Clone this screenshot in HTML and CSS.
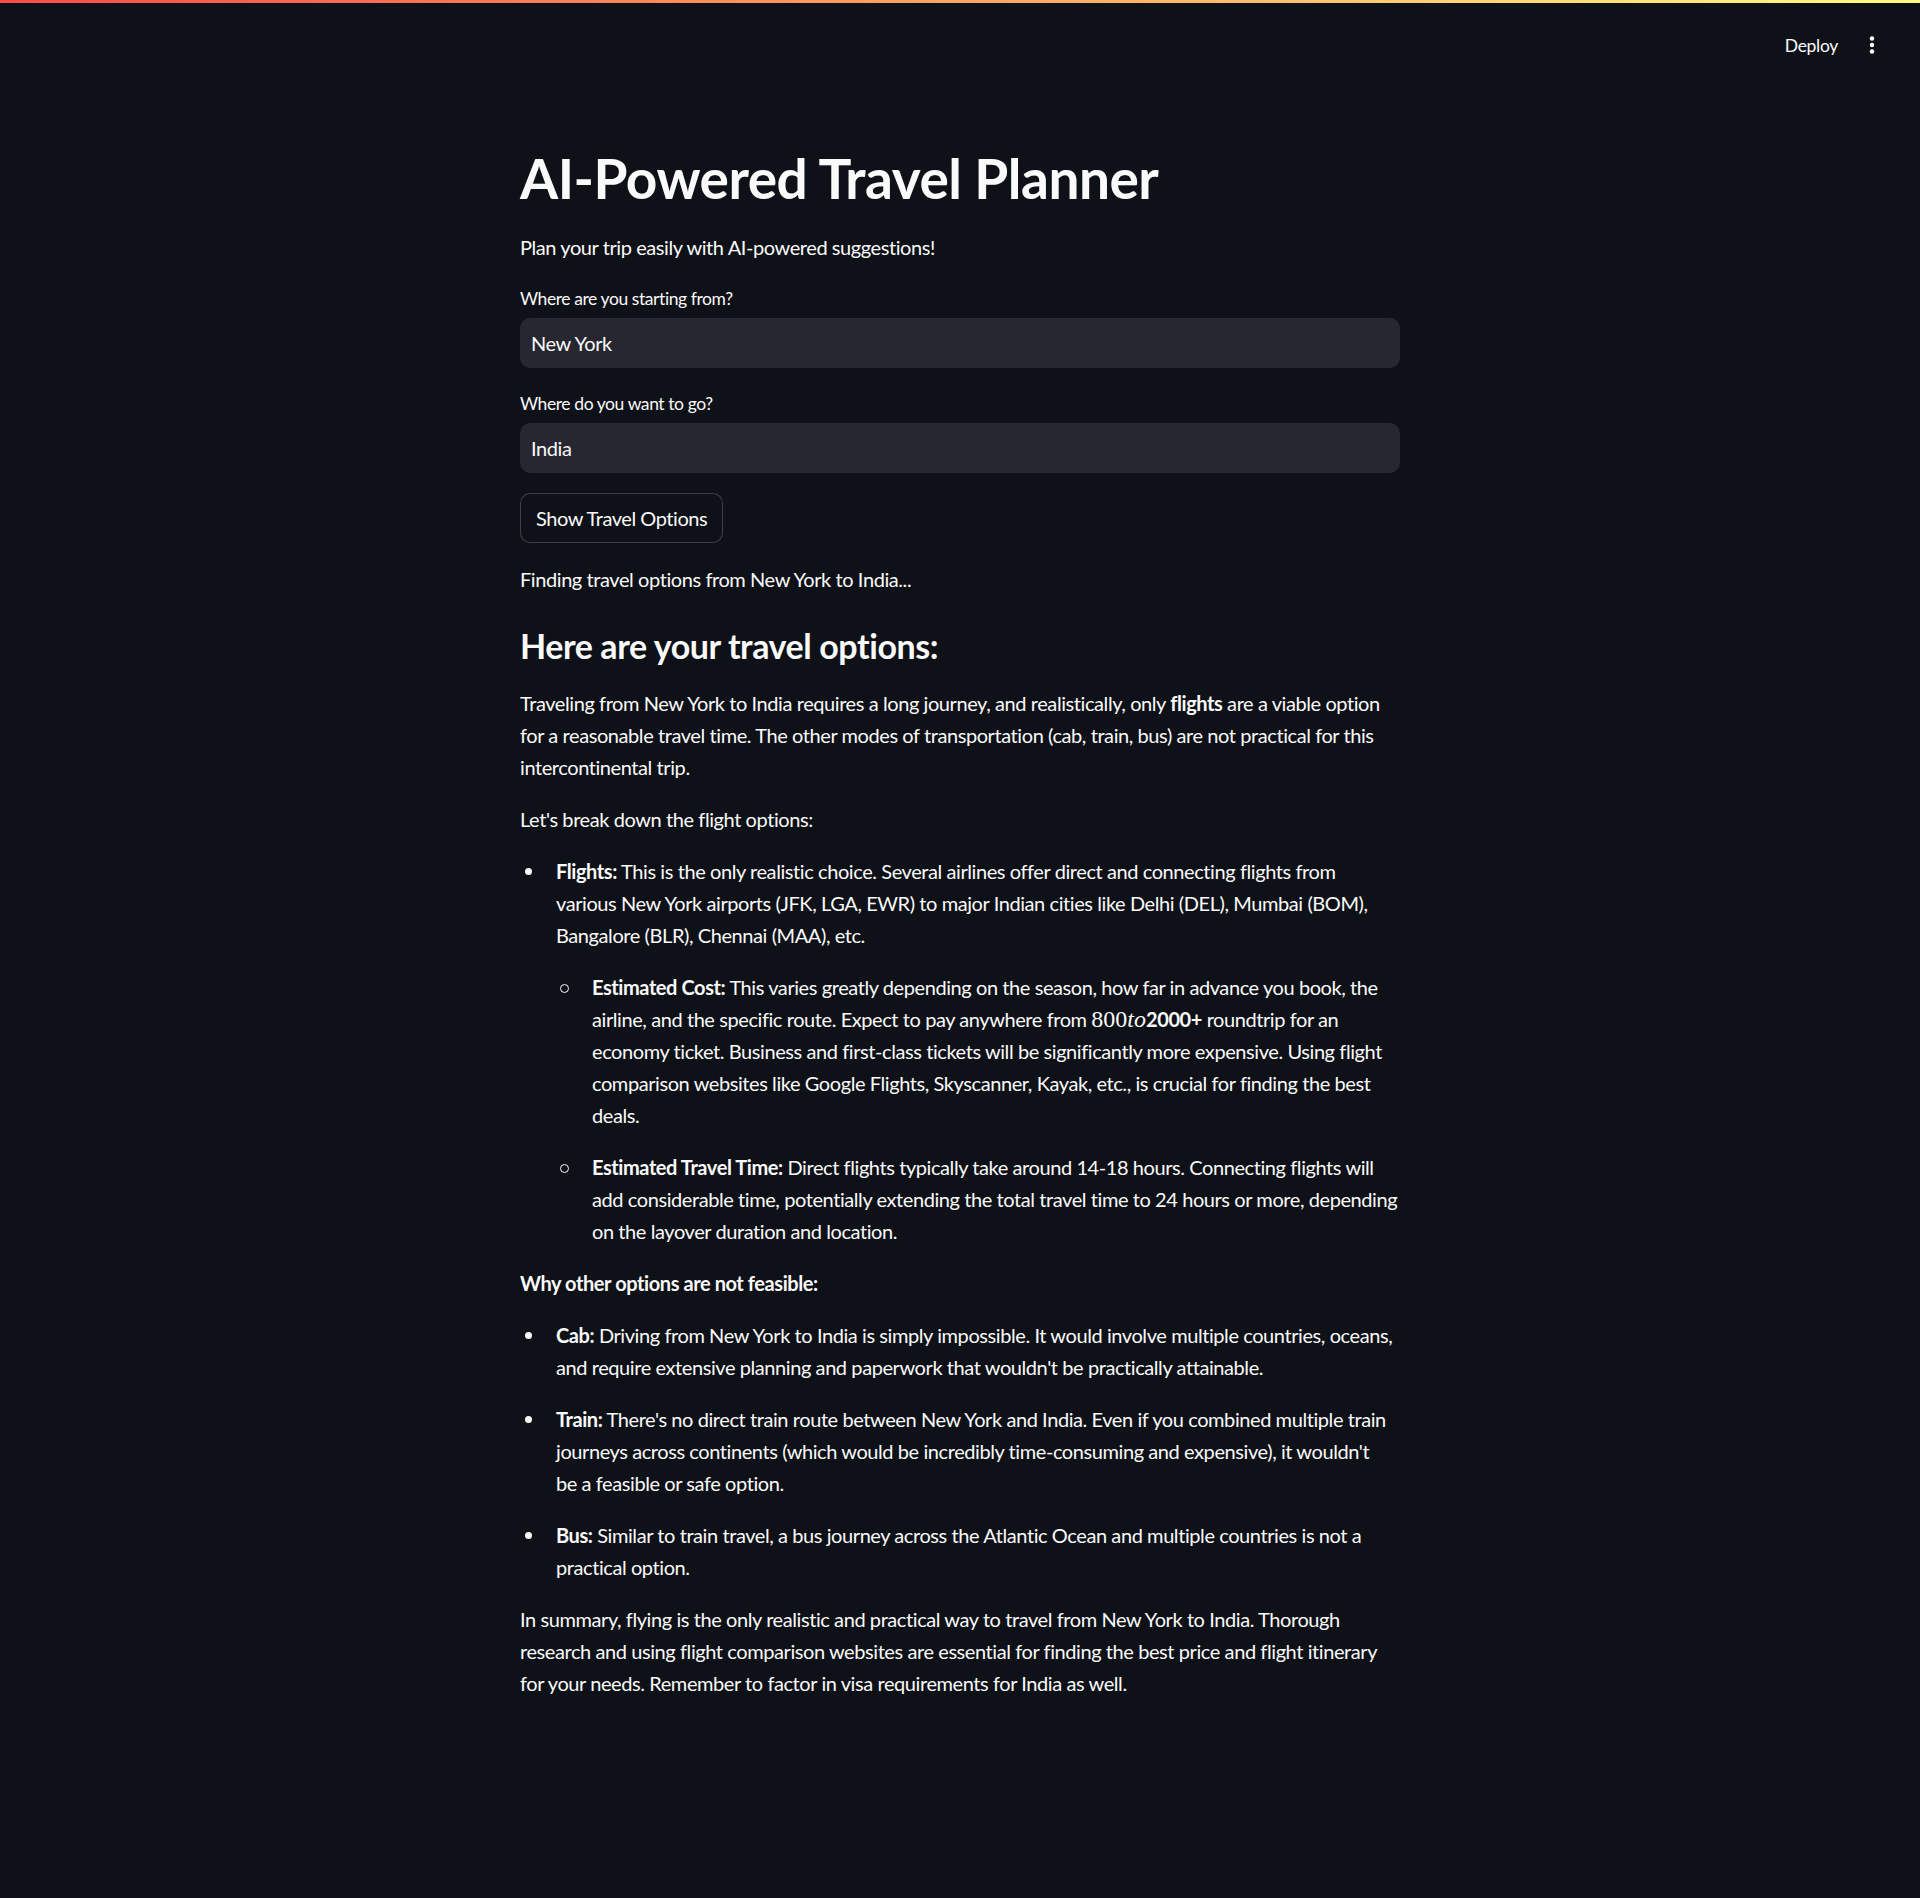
FILE: index.html
```html
<!DOCTYPE html>
<html lang="en">
<head>
<meta charset="utf-8">
<title>AI-Powered Travel Planner</title>
<link rel="stylesheet" href="styles.css">
</head>
<body>
<div class="decoration"></div>
<header class="app-header">
  <div class="toolbar">
    <button class="deploy">Deploy</button>
    <button class="menu" aria-label="Main menu">
      <svg width="6" height="20" viewBox="0 0 6 20"><circle cx="3" cy="3.5" r="2.2" fill="#fafafa"/><circle cx="3" cy="10" r="2.2" fill="#fafafa"/><circle cx="3" cy="16.5" r="2.2" fill="#fafafa"/></svg>
    </button>
  </div>
</header>
<main class="main">
  <div class="block">
    <h1 class="title">AI-Powered Travel Planner</h1>
    <p class="text">Plan your trip easily with AI-powered suggestions!</p>
    <div class="field">
      <label class="label">Where are you starting from?</label>
      <div class="input">New York</div>
    </div>
    <div class="field">
      <label class="label">Where do you want to go?</label>
      <div class="input">India</div>
    </div>
    <div><button class="btn">Show Travel Options</button></div>
    <p class="text">Finding travel options from New York to India...</p>
    <div class="md">
      <h3>Here are your travel options:</h3>
      <p>Traveling from New York to India requires a long journey, and realistically, only <strong>flights</strong> are a viable option for a reasonable travel time. The other modes of transportation (cab, train, bus) are not practical for this intercontinental trip.</p>
      <p>Let's break down the flight options:</p>
      <ul>
        <li>
          <p><strong>Flights:</strong> This is the only realistic choice. Several airlines offer direct and connecting flights from<br>various New York airports (JFK, LGA, EWR) to major Indian cities like Delhi (DEL), Mumbai (BOM), Bangalore (BLR), Chennai (MAA), etc.</p>
          <ul class="sub">
            <li><p><strong>Estimated Cost:</strong> This varies greatly depending on the season, how far in advance you book, the airline, and the specific route. Expect to pay anywhere from <span class="math">800<i>to</i></span><strong>2000+</strong> roundtrip for an economy ticket. Business and first-class tickets will be significantly more expensive. Using flight comparison websites like Google Flights, Skyscanner, Kayak, etc., is crucial for finding the best deals.</p></li>
            <li><p><strong>Estimated Travel Time:</strong> Direct flights typically take around 14-18 hours. Connecting flights will add considerable time, potentially extending the total travel time to 24 hours or more, depending on the layover duration and location.</p></li>
          </ul>
        </li>
      </ul>
      <p><strong>Why other options are not feasible:</strong></p>
      <ul>
        <li><p><strong>Cab:</strong> Driving from New York to India is simply impossible. It would involve multiple countries, oceans, and require extensive planning and paperwork that wouldn't be practically attainable.</p></li>
        <li><p><strong>Train:</strong> There's no direct train route between New York and India. Even if you combined multiple train journeys across continents (which would be incredibly time-consuming and expensive), it wouldn't<br>be a feasible or safe option.</p></li>
        <li><p><strong>Bus:</strong> Similar to train travel, a bus journey across the Atlantic Ocean and multiple countries is not a practical option.</p></li>
      </ul>
      <p>In summary, flying is the only realistic and practical way to travel from New York to India. Thorough research and using flight comparison websites are essential for finding the best price and flight itinerary for your needs. Remember to factor in visa requirements for India as well.</p>
    </div>
  </div>
</main>
</body>
</html>
```

FILE: styles.css
```css
* { box-sizing: border-box; }
html, body {
  margin: 0;
  padding: 0;
  background: #0e1117;
  color: #fafafa;
  font-family: "Lato", "Liberation Sans", sans-serif;
  font-size: 20px;
  letter-spacing: -0.42px;
}
.decoration {
  height: 3px;
  background: linear-gradient(90deg, #ff4b4b, #fffd80);
}
.app-header {
  height: 72px;
  display: flex;
  justify-content: flex-end;
  align-items: center;
  padding-right: 45px;
}
.toolbar {
  display: flex;
  align-items: center;
  gap: 31px;
  margin-top: 12px;
}
.deploy {
  background: transparent;
  border: none;
  color: #fafafa;
  font-family: inherit;
  font-size: 17.5px;
  letter-spacing: -0.3px;
  padding: 0;
}
.menu {
  background: transparent;
  border: none;
  padding: 0;
  display: flex;
}
.main {
  display: flex;
  justify-content: center;
}
.block {
  width: 880px;
  padding: 45px 0 200px;
  display: flex;
  flex-direction: column;
  gap: 20px;
}
.title {
  margin: 0;
  padding-top: 25px;
  font-size: 55px;
  line-height: 66px;
  font-weight: 700;
  letter-spacing: -0.5px;
}
.text {
  margin: 0;
  line-height: 32px;
}
.field {
  display: flex;
  flex-direction: column;
}
.label {
  font-size: 17.5px;
  height: 30px;
  display: flex;
  align-items: center;
  margin-bottom: 5px;
}
.input {
  height: 50px;
  background: #262730;
  border-radius: 10px;
  padding: 0 11px;
  display: flex;
  align-items: center;
  font-size: 20px;
}
.btn {
  height: 50px;
  padding: 0 15px;
  background: #0e1117;
  border: 1px solid rgba(250, 250, 250, 0.2);
  border-radius: 10px;
  color: #fafafa;
  font-family: inherit;
  font-size: 20px;
  letter-spacing: -0.45px;
}
.md h3 {
  margin: 0;
  padding: 10px 0 20px;
  font-size: 34px;
  line-height: 42px;
  font-weight: 700;
}
.md p {
  margin: 0 0 20px;
  line-height: 32px;
}
.md > p:last-child { margin-bottom: 0; }
.md strong { font-weight: 700; }
.md ul {
  margin: 0;
  padding-left: 36px;
  list-style: none;
}
.md li {
  margin: 0;
  position: relative;
}
.md li::before {
  content: "";
  position: absolute;
  left: -31px;
  top: 13px;
  width: 7px;
  height: 7px;
  border-radius: 50%;
  background: #fafafa;
}
.md ul.sub > li::before {
  left: -32px;
  top: 13px;
  width: 7px;
  height: 7px;
  background: transparent;
  border: 1px solid #fafafa;
}
.math {
  font-family: "Liberation Serif", "DejaVu Serif", serif;
  font-size: 24px;
  letter-spacing: 0;
}
.math i { font-style: italic; }
```
